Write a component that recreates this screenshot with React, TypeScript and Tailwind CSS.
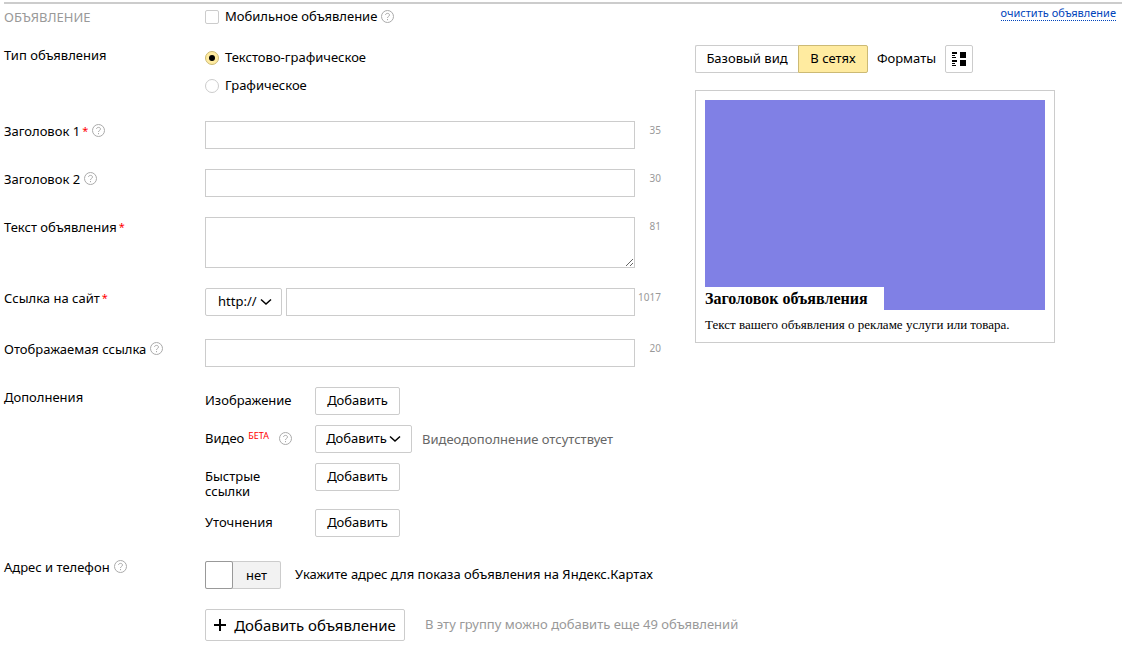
import type { ReactNode } from "react";

const inputClass = "h-7 w-full border border-[#ccc] bg-white px-2 outline-none";
const buttonClass =
  "flex h-7 items-center justify-center rounded-[2px] border border-[#ccc] bg-white";
const radioClass =
  "mr-1.5 grid h-3.5 w-3.5 appearance-none place-items-center rounded-full border border-[#ccc] before:h-1.5 before:w-1.5 before:rounded-full checked:border-[#ccba75] checked:bg-[#ffeba0] checked:before:bg-black";

function HelpIcon() {
  return (
    <svg
      className="h-[13px] w-[13px] shrink-0"
      viewBox="0 0 13 13"
      fill="none"
      stroke="#aaa"
      aria-hidden="true"
    >
      <circle cx="6.5" cy="6.5" r="6" />
      <path d="M4.5 5c0-1 .8-1.6 2-1.6s2 .6 2 1.6c0 1.4-2 1.4-2 3" />
      <path d="M6.5 9v1.2" />
    </svg>
  );
}

function ChevronIcon({ className }: { className?: string }) {
  return (
    <svg
      className={className}
      width="12"
      height="8"
      viewBox="0 0 12 8"
      fill="none"
      stroke="#000"
      strokeWidth="1.5"
      aria-hidden="true"
    >
      <path d="M1 1.5l5 4.5 5-4.5" />
    </svg>
  );
}

type RowProps = {
  label: string;
  htmlFor?: string;
  required?: boolean;
  help?: boolean;
  counter?: number;
  children: ReactNode;
};

function Row({ label, htmlFor, required, help, counter, children }: RowProps) {
  const Tag = htmlFor ? "label" : "div";
  return (
    <div className="flex items-start">
      <div className="flex w-[201px] shrink-0 items-center leading-5">
        <Tag htmlFor={htmlFor}>{label}</Tag>
        {required && <span className="ml-0.5 text-[11px] text-[#f00]">*</span>}
        {help && (
          <span className="ml-1 pb-px">
            <HelpIcon />
          </span>
        )}
      </div>
      <div className="min-w-0 flex-1">{children}</div>
      {counter !== undefined && (
        <div className="w-[26px] shrink-0 text-right text-[10px] leading-[18px] text-[#999]">
          {counter}
        </div>
      )}
    </div>
  );
}

function Extra({ label, children }: { label: ReactNode; children: ReactNode }) {
  return (
    <div className="flex items-start">
      <div className="flex w-[110px] shrink-0 items-center pt-1.5 leading-[15px]">
        {label}
      </div>
      {children}
    </div>
  );
}

function AdPreview() {
  return (
    <aside className="w-[360px] shrink-0">
      <div className="flex items-center">
        <button
          type="button"
          className="h-7 w-[103px] rounded-l-[2px] border border-r-0 border-[#ccc]"
        >
          Базовый вид
        </button>
        <button
          type="button"
          className="h-7 w-[70px] rounded-r-[2px] border border-[#ccba75] bg-[#ffeba0]"
        >
          В сетях
        </button>
        <span className="w-[77px] text-center">Форматы</span>
        <button
          type="button"
          aria-label="Форматы"
          className="flex h-7 w-7 items-center justify-center rounded-[2px] border border-[#ccc]"
        >
          <svg width="14" height="14" viewBox="0 0 14 14" aria-hidden="true">
            <path d="M0 0h5v2H0zM0 3h3v1H0zM0 5h4v1H0zM0 8h5v2H0zM0 11h3v1H0zM0 13h4v1H0zM8 0h6v6H8zM8 8h6v6H8z" />
          </svg>
        </button>
      </div>

      {/* Ad card */}
      <div className="mt-[17px] border border-[#ccc] px-[9px] pt-[9px] pb-2 font-['Liberation_Serif',serif]">
        <div className="flex h-[210px] items-end bg-[#8080e5]">
          <h3 className="bg-white pr-4 text-[16px] leading-[23px] font-bold">
            Заголовок объявления
          </h3>
        </div>
        <p className="pt-1.5 text-[13px] leading-[18px]">
          Текст вашего объявления о рекламе услуги или товара.
        </p>
      </div>
    </aside>
  );
}

export default function App() {
  return (
    <form className="pt-0.5 pl-1 font-['Noto_Sans',sans-serif] text-[13px] text-black">
      {/* Header */}
      <header className="flex h-[43px] items-start border-t-2 border-[#ccc]">
        <h2 className="w-[201px] shrink-0 leading-[26px] text-[#999]">ОБЪЯВЛЕНИЕ</h2>
        <label className="flex items-center leading-[25px]">
          <input
            type="checkbox"
            className="mr-1.5 h-3.5 w-3.5 appearance-none rounded-[2px] border border-[#ccc] bg-white"
          />
          Мобильное объявление
          <span className="ml-1">
            <HelpIcon />
          </span>
        </label>
        <a
          href="#"
          className="mt-0.5 mr-1.5 ml-auto border-b border-dotted border-[#04b] text-[11px] leading-[14px] text-[#04b]"
        >
          очистить объявление
        </a>
      </header>

      <div className="flex items-start">
        <div className="mr-[34px] flex max-w-[657px] min-w-0 flex-1 flex-col gap-5">
          <Row label="Тип объявления">
            <div className="flex flex-col gap-0.5 pb-0.5">
              <label className="flex h-[26px] items-center">
                <input type="radio" name="adType" defaultChecked className={radioClass} />
                Текстово-графическое
              </label>
              <label className="flex h-[26px] items-center">
                <input type="radio" name="adType" className={radioClass} />
                Графическое
              </label>
            </div>
          </Row>

          <Row label="Заголовок 1" htmlFor="title1" required help counter={35}>
            <input id="title1" type="text" className={inputClass} />
          </Row>

          <Row label="Заголовок 2" htmlFor="title2" help counter={30}>
            <input id="title2" type="text" className={inputClass} />
          </Row>

          <Row label="Текст объявления" htmlFor="body" required counter={81}>
            <textarea
              id="body"
              className="block h-[51px] w-full resize border border-[#ccc] bg-white px-2 outline-none"
            />
          </Row>

          <Row label="Ссылка на сайт" htmlFor="href" required counter={1017}>
            <div className="flex gap-1 pb-[3px]">
              <div className="relative">
                <select
                  aria-label="Протокол"
                  className="h-7 w-[77px] appearance-none rounded-[2px] border border-[#ccc] bg-white pl-3"
                >
                  <option>http://</option>
                  <option>https://</option>
                </select>
                <ChevronIcon className="pointer-events-none absolute top-2.5 right-2.5" />
              </div>
              <input id="href" type="text" className={inputClass} />
            </div>
          </Row>

          <Row label="Отображаемая ссылка" htmlFor="displayHref" help counter={20}>
            <input id="displayHref" type="text" className={inputClass} />
          </Row>

          <Row label="Дополнения">
            <div className="flex flex-col gap-2.5">
              <Extra label="Изображение">
                <button type="button" className={`${buttonClass} w-[85px]`}>
                  Добавить
                </button>
              </Extra>
              <Extra
                label={
                  <>
                    Видео
                    <span className="ml-1 self-start text-[9px] leading-[10px] text-[#f00]">
                      БЕТА
                    </span>
                    <span className="ml-2.5">
                      <HelpIcon />
                    </span>
                  </>
                }
              >
                <button type="button" className={`${buttonClass} w-[97px] gap-0.5`}>
                  Добавить
                  <ChevronIcon />
                </button>
                <span className="ml-2.5 leading-7 text-[#666]">
                  Видеодополнение отсутствует
                </span>
              </Extra>
              <Extra label={<span className="w-20">Быстрые ссылки</span>}>
                <button type="button" className={`${buttonClass} w-[85px]`}>
                  Добавить
                </button>
              </Extra>
              <Extra label="Уточнения">
                <button type="button" className={`${buttonClass} w-[85px]`}>
                  Добавить
                </button>
              </Extra>
            </div>
          </Row>

          <Row label="Адрес и телефон" help>
            <div className="flex items-center pt-1">
              <button
                type="button"
                role="switch"
                aria-checked="false"
                aria-label="Адрес и телефон"
                className="flex h-7 w-[76px] rounded-[2px] border border-l-0 border-[#ccc] bg-[#f2f2f2] leading-[26px]"
              >
                <span className="-my-px h-7 w-7 rounded-[2px] border border-[#999] bg-white" />
                <span className="flex-1">нет</span>
              </button>
              <span className="ml-3.5">
                Укажите адрес для показа объявления на Яндекс.Картах
              </span>
            </div>
          </Row>
        </div>

        <AdPreview />
      </div>

      {/* Add one more ad */}
      <div className="mt-5 ml-[201px] flex items-center">
        <button
          type="button"
          className="flex h-8 w-[200px] items-center justify-center gap-2 rounded-[2px] border border-[#ccc] bg-white text-[15px]"
        >
          <svg width="12" height="12" viewBox="0 0 12 12" aria-hidden="true">
            <path d="M5 0h2v5h5v2H7v5H5V7H0V5h5z" />
          </svg>
          Добавить объявление
        </button>
        <span className="ml-5 text-[#999]">
          В эту группу можно добавить еще 49 объявлений
        </span>
      </div>
    </form>
  );
}
